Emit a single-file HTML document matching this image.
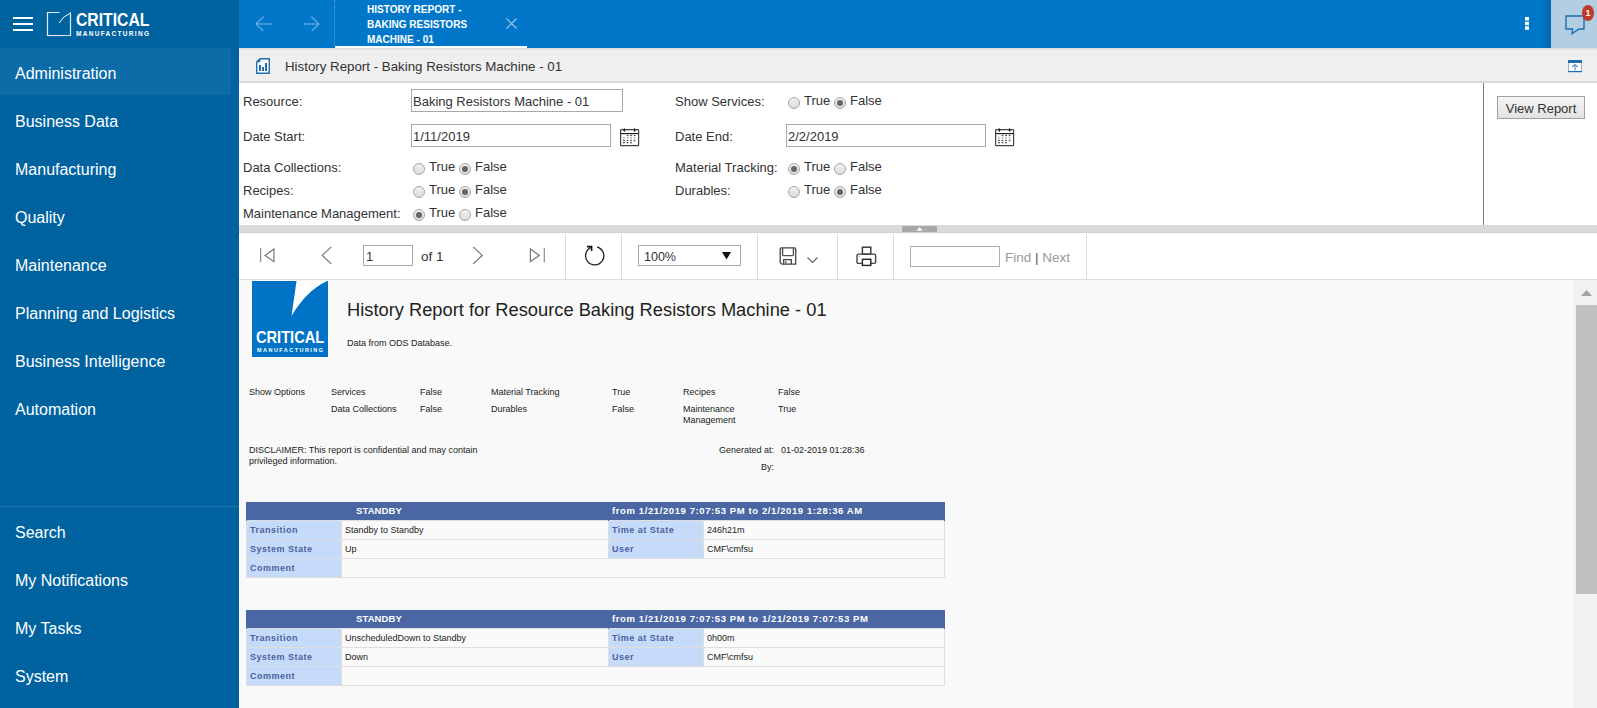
<!DOCTYPE html>
<html><head><meta charset="utf-8">
<style>
*{box-sizing:border-box;margin:0;padding:0}
html,body{width:1597px;height:708px;overflow:hidden;font-family:"Liberation Sans",sans-serif;background:#fff;position:relative}
.a{position:absolute}
svg{position:absolute;overflow:visible}
#side{position:absolute;left:0;top:0;width:239px;height:708px;background:#0063a0}
.nav{position:absolute;left:15px;color:#fff;font-size:16px;line-height:20px;white-space:nowrap;margin-top:0.5px}
#hdr{position:absolute;left:239px;top:0;width:1358px;height:48px;background:#0077c8}
.tab{position:absolute;left:128px;top:2px;color:#fff;font-size:10.5px;font-weight:bold;line-height:15px;white-space:nowrap;transform:scaleX(0.955);transform-origin:0 0}
#tbar{position:absolute;left:239px;top:48px;width:1358px;height:35px;background:#efefef;border-top:2px solid #e2e2e2;border-bottom:2px solid #d9d9d9}
.lbl{position:absolute;font-size:13px;color:#333;white-space:nowrap;line-height:16px}
.inp{position:absolute;border:1px solid #a9a9a9;background:#fff;font-size:13px;color:#333;line-height:20px;padding-left:1px;padding-top:2px;white-space:nowrap}
.rad{position:absolute;width:12px;height:12px;border-radius:50%;border:1px solid #a6a6a6;background:linear-gradient(#f0f0f0,#dcdcdc)}
.rad.on::after{content:"";position:absolute;left:2px;top:2px;width:6px;height:6px;border-radius:50%;background:#666}
#split{position:absolute;left:239px;top:225px;width:1358px;height:8px;background:#dadada}
#tool{position:absolute;left:239px;top:232px;width:1358px;height:48px;background:#fff;border-top:1px solid #d0d0d0;border-bottom:1px solid #dcdcdc}
.sep{position:absolute;top:1px;width:1px;height:46px;background:#dcdcdc}
#rep{position:absolute;left:239px;top:280px;width:1336px;height:428px;background:#f9f9f9}
.r{position:absolute;font-size:9px;color:#222;white-space:nowrap;line-height:11px;margin-top:1px}
#sb{position:absolute;left:1574px;top:280px;width:23px;height:428px;background:#f0f1f1}
table.t{position:absolute;border-collapse:collapse;width:698px;font-size:9px;table-layout:fixed}
table.t th{background:#4a67a3;color:#fff;font-weight:bold;height:18px;line-height:16px;vertical-align:top;text-align:left;padding:0;border:1px solid #4a67a3;border-bottom:none}
table.t td{height:19px;border:1px solid #dedede;padding:0 0 0 3px;line-height:17px;white-space:nowrap;color:#222;background:#fafafa}
table.t td.l{background:#c6dbfa;color:#4a62a0;font-weight:bold;border-color:#dedede;letter-spacing:0.5px}
</style></head><body>
<!-- SIDEBAR -->
<div id="side">
  <svg style="left:13px;top:17px" width="20" height="14"><rect x="0" y="0" width="20" height="2" fill="#fff"/><rect x="0" y="6" width="20" height="2" fill="#fff"/><rect x="0" y="12" width="20" height="2" fill="#fff"/></svg>
  <svg style="left:47px;top:12px" width="25" height="25"><path d="M12.5 0.5 H0.5 V23.5 H23.5 V0.5" fill="none" stroke="#dfe9f2" stroke-width="1.2"/><path d="M12 11 Q16 4 23.5 1" fill="none" stroke="#fff" stroke-width="1"/></svg>
  <div class="a" style="left:76px;top:9.5px;color:#fff;font-weight:bold;font-size:18px;line-height:20px;letter-spacing:0px;transform:scaleX(0.875);transform-origin:0 0">CRITICAL</div>
  <div class="a" style="left:76px;top:30px;color:#fff;font-weight:bold;font-size:6.5px;line-height:8px;letter-spacing:1.3px">MANUFACTURING</div>
  <div class="a" style="left:0;top:48px;width:231px;height:47px;background:#0c6ca8"></div>
  <div class="nav" style="top:63px">Administration</div>
  <div class="nav" style="top:111px">Business Data</div>
  <div class="nav" style="top:159px">Manufacturing</div>
  <div class="nav" style="top:207px">Quality</div>
  <div class="nav" style="top:255px">Maintenance</div>
  <div class="nav" style="top:303px">Planning and Logistics</div>
  <div class="nav" style="top:351px">Business Intelligence</div>
  <div class="nav" style="top:399px">Automation</div>
  <div class="a" style="left:0;top:506px;width:239px;height:0;border-top:1px dotted #3a86b8"></div>
  <div class="nav" style="top:522px">Search</div>
  <div class="nav" style="top:570px">My Notifications</div>
  <div class="nav" style="top:618px">My Tasks</div>
  <div class="nav" style="top:666px">System</div>
</div>
<!-- HEADER -->
<div id="hdr">
  <svg style="left:16px;top:16px" width="18" height="16"><path d="M8.5 0.8 L1 8 L8.5 15.2 M1 8 H17" fill="none" stroke="#72b1e2" stroke-width="1.5" stroke-dasharray="2 0.6"/></svg>
  <svg style="left:63px;top:16px" width="18" height="16"><path d="M9.5 0.8 L17 8 L9.5 15.2 M17 8 H1" fill="none" stroke="#72b1e2" stroke-width="1.5" stroke-dasharray="2 0.6"/></svg>
  <div class="a" style="left:95px;top:0;height:46px;border-left:1px dotted #5aa3d8"></div>
  <div class="tab">HISTORY REPORT -<br>BAKING RESISTORS<br>MACHINE - 01</div>
  <svg style="left:267px;top:18px" width="11" height="11"><path d="M0.5 0.5 L10.5 10.5 M10.5 0.5 L0.5 10.5" stroke="#9cc8ea" stroke-width="1.2"/></svg>
  <div class="a" style="left:96px;top:46px;width:192px;height:2px;background:#fff"></div>
  <svg style="left:1286px;top:17px" width="4" height="13"><rect x="0" y="0" width="4" height="3.5" fill="#fff"/><rect x="0" y="4.7" width="4" height="3.5" fill="#fff"/><rect x="0" y="9.3" width="4" height="3.5" fill="#fff"/></svg>
  <div class="a" style="left:1302px;top:0;width:10px;height:48px;background:linear-gradient(90deg,rgba(0,0,0,0),rgba(0,0,0,0.13))"></div><div class="a" style="left:1312px;top:0;width:46px;height:48px;background:#b3cde3"></div>
  <svg style="left:1326px;top:14.5px" width="22" height="21"><path d="M1 1 H19 V14 H14 L7 18.5 L7.5 14 H1 Z" fill="none" stroke="#1d6eae" stroke-width="1.4" stroke-linejoin="miter"/></svg>
  <div class="a" style="left:1343px;top:5px;width:12px;height:16px;border-radius:50%;background:#c0392b;color:#fff;font-size:9px;font-weight:bold;line-height:16px;text-align:center">1</div>
</div>
<!-- TITLE BAR -->
<div id="tbar">
  <svg style="left:17px;top:8px" width="15" height="17"><path d="M4 0.75 H13.25 V15.25 H0.75 V4 Z" fill="#fff" stroke="#1d6eae" stroke-width="1.4"/><path d="M0.5 4.3 L4.3 0.5 V4.3 Z" fill="#1d6eae"/><rect x="3" y="7" width="2" height="6" fill="#1d6eae"/><rect x="6" y="9" width="2" height="4" fill="#1d6eae"/><rect x="9" y="5" width="2" height="8" fill="#1d6eae"/></svg>
  <div class="a" style="left:46px;top:8px;font-size:13.3px;color:#333;line-height:18px;white-space:nowrap">History Report - Baking Resistors Machine - 01</div>
  <svg style="left:1329px;top:10px" width="14" height="12"><rect x="0.5" y="0.5" width="13" height="11" fill="#fff" stroke="#9bb0d8" stroke-width="1"/><rect x="0" y="0" width="14" height="3" fill="#1d6eae"/><rect x="0" y="11" width="14" height="1.2" fill="#1d6eae"/><path d="M7 10.5 V4.5 M4.2 7 L7 4.5 L9.8 7" fill="none" stroke="#6e8fca" stroke-width="1.2"/></svg>
</div>
<!-- PARAMS -->
<div class="lbl" style="left:243px;top:94px">Resource:</div>
<div class="inp" style="left:411px;top:89px;width:212px;height:23px">Baking Resistors Machine - 01</div>
<div class="lbl" style="left:243px;top:129px">Date Start:</div>
<div class="inp" style="left:411px;top:124px;width:200px;height:23px">1/11/2019</div>
<div class="lbl" style="left:243px;top:160px">Data Collections:</div>
<div class="lbl" style="left:243px;top:183px">Recipes:</div>
<div class="lbl" style="left:243px;top:206px">Maintenance Management:</div>
<div class="rad" style="left:413px;top:163px"></div><div class="lbl" style="left:429px;top:159px">True</div>
<div class="rad on" style="left:459px;top:163px"></div><div class="lbl" style="left:475px;top:159px">False</div>
<div class="rad" style="left:413px;top:186px"></div><div class="lbl" style="left:429px;top:182px">True</div>
<div class="rad on" style="left:459px;top:186px"></div><div class="lbl" style="left:475px;top:182px">False</div>
<div class="rad on" style="left:413px;top:209px"></div><div class="lbl" style="left:429px;top:205px">True</div>
<div class="rad" style="left:459px;top:209px"></div><div class="lbl" style="left:475px;top:205px">False</div>

<div class="lbl" style="left:675px;top:94px">Show Services:</div>
<div class="rad" style="left:788px;top:97px"></div><div class="lbl" style="left:804px;top:93px">True</div>
<div class="rad on" style="left:834px;top:97px"></div><div class="lbl" style="left:850px;top:93px">False</div>
<div class="lbl" style="left:675px;top:129px">Date End:</div>
<div class="inp" style="left:786px;top:124px;width:200px;height:23px">2/2/2019</div>
<div class="lbl" style="left:675px;top:160px">Material Tracking:</div>
<div class="rad on" style="left:788px;top:163px"></div><div class="lbl" style="left:804px;top:159px">True</div>
<div class="rad" style="left:834px;top:163px"></div><div class="lbl" style="left:850px;top:159px">False</div>
<div class="lbl" style="left:675px;top:183px">Durables:</div>
<div class="rad" style="left:788px;top:186px"></div><div class="lbl" style="left:804px;top:182px">True</div>
<div class="rad on" style="left:834px;top:186px"></div><div class="lbl" style="left:850px;top:182px">False</div>

<svg style="left:620px;top:128px" width="19" height="18"><rect x="0.6" y="1.6" width="18" height="16" rx="0.6" fill="#fff" stroke="#444" stroke-width="1.2"/><path d="M0.6 5.6 H18.6" stroke="#111" stroke-width="1.1"/><ellipse cx="4.3" cy="2" rx="1" ry="1.7" fill="#222"/><ellipse cx="14.6" cy="2" rx="1" ry="1.7" fill="#222"/><rect x="6.6" y="6.8" width="1.8" height="1.3" fill="#555"/><rect x="10.1" y="6.8" width="1.8" height="1.3" fill="#555"/><rect x="13.7" y="6.8" width="1.8" height="1.3" fill="#555"/><rect x="3.0" y="9.2" width="1.8" height="1.3" fill="#aaa"/><rect x="6.6" y="9.2" width="1.8" height="1.3" fill="#aaa"/><rect x="10.1" y="9.2" width="1.8" height="1.3" fill="#aaa"/><rect x="13.7" y="9.2" width="1.8" height="1.3" fill="#aaa"/><rect x="3.0" y="11.8" width="1.8" height="1.3" fill="#555"/><rect x="6.6" y="11.8" width="1.8" height="1.3" fill="#555"/><rect x="10.1" y="11.8" width="1.8" height="1.3" fill="#555"/><rect x="13.7" y="11.8" width="1.8" height="1.3" fill="#555"/><rect x="3.0" y="14.0" width="1.8" height="1.3" fill="#555"/><rect x="6.6" y="14.0" width="1.8" height="1.3" fill="#555"/><rect x="10.1" y="14.0" width="1.8" height="1.3" fill="#555"/></svg>
<svg style="left:995px;top:128px" width="19" height="18"><rect x="0.6" y="1.6" width="18" height="16" rx="0.6" fill="#fff" stroke="#444" stroke-width="1.2"/><path d="M0.6 5.6 H18.6" stroke="#111" stroke-width="1.1"/><ellipse cx="4.3" cy="2" rx="1" ry="1.7" fill="#222"/><ellipse cx="14.6" cy="2" rx="1" ry="1.7" fill="#222"/><rect x="6.6" y="6.8" width="1.8" height="1.3" fill="#555"/><rect x="10.1" y="6.8" width="1.8" height="1.3" fill="#555"/><rect x="13.7" y="6.8" width="1.8" height="1.3" fill="#555"/><rect x="3.0" y="9.2" width="1.8" height="1.3" fill="#aaa"/><rect x="6.6" y="9.2" width="1.8" height="1.3" fill="#aaa"/><rect x="10.1" y="9.2" width="1.8" height="1.3" fill="#aaa"/><rect x="13.7" y="9.2" width="1.8" height="1.3" fill="#aaa"/><rect x="3.0" y="11.8" width="1.8" height="1.3" fill="#555"/><rect x="6.6" y="11.8" width="1.8" height="1.3" fill="#555"/><rect x="10.1" y="11.8" width="1.8" height="1.3" fill="#555"/><rect x="13.7" y="11.8" width="1.8" height="1.3" fill="#555"/><rect x="3.0" y="14.0" width="1.8" height="1.3" fill="#555"/><rect x="6.6" y="14.0" width="1.8" height="1.3" fill="#555"/><rect x="10.1" y="14.0" width="1.8" height="1.3" fill="#555"/></svg>

<div class="a" style="left:1483px;top:83px;width:1px;height:142px;background:#7a7a7a"></div>
<div class="a" style="left:1497px;top:96px;width:88px;height:23px;border:1px solid #a0a0a0;background:linear-gradient(#f5f5f5,#e2e2e2);font-size:13px;color:#333;line-height:21px;padding-top:1px;text-align:center;white-space:nowrap">View Report</div>

<!-- SPLITTER -->
<div id="split">
  <div class="a" style="left:663px;top:1px;width:35px;height:6px;background:#a9a9a9"></div>
  <svg style="left:677px;top:2px" width="7" height="5"><path d="M0.3 3.8 L3.5 0.3 L6.7 3.8 Z" fill="#fff"/></svg>
</div>

<!-- TOOLBAR -->
<div id="tool">
  <svg style="left:21px;top:15px" width="16" height="16"><path d="M0.6 0.2 V14.3" stroke="#8a8a8a" stroke-width="1.2"/><path d="M13.9 1 V13.6 L5 7.4 Z" fill="none" stroke="#7a7a7a" stroke-width="1.2" stroke-linejoin="miter"/></svg>
  <svg style="left:82px;top:13px" width="12" height="19"><path d="M10.3 0.9 L1.3 9.4 L10.3 17.9" fill="none" stroke="#7a7a7a" stroke-width="1.3"/></svg>
  <div class="inp" style="left:124px;top:12px;width:50px;height:21px;line-height:19px;padding-left:2px;padding-top:1px;font-size:13px">1</div>
  <div class="a" style="left:182px;top:16px;font-size:13.5px;color:#333;line-height:16px">of 1</div>
  <svg style="left:233px;top:13px" width="12" height="19"><path d="M1.2 0.9 L10.2 9.4 L1.2 17.9" fill="none" stroke="#7a7a7a" stroke-width="1.3"/></svg>
  <svg style="left:290px;top:15px" width="17" height="16"><path d="M15.3 0.2 V14.3" stroke="#8a8a8a" stroke-width="1.2"/><path d="M1.4 1 V13.6 L10.3 7.4 Z" fill="none" stroke="#7a7a7a" stroke-width="1.2" stroke-linejoin="miter"/></svg>
  <div class="sep" style="left:326px"></div>
  <svg style="left:344.5px;top:13px" width="21" height="21"><path d="M13.2 1 A9.1 9.1 0 1 1 7.6 1.2" fill="none" stroke="#222" stroke-width="1.3"/><path d="M3 0.6 H7.6 V4.9" fill="none" stroke="#111" stroke-width="1.6" stroke-linejoin="miter"/></svg>
  <div class="sep" style="left:382px"></div>
  <div class="inp" style="left:399px;top:12px;width:103px;height:21px;line-height:19px;padding-left:5px;font-size:12.5px">100%</div>
  <svg style="left:483px;top:19px" width="9" height="8"><path d="M0 0 H9 L4.5 7.5 Z" fill="#111"/></svg>
  <div class="sep" style="left:518px"></div>
  <svg style="left:540px;top:13.6px" width="18" height="19"><path d="M1.2 2.1 Q1.2 0.9 2.4 0.9 H15.5 Q16.7 0.9 16.7 2.1 V17.2 H3 L1.2 15.4 Z" fill="none" stroke="#444" stroke-width="1.3"/><path d="M3.6 0.9 V7.7 Q3.6 8.6 4.5 8.6 H13.5 Q14.4 8.6 14.4 7.7 V0.9" fill="none" stroke="#555" stroke-width="1.4"/><path d="M4.7 17.2 V12.6 H12.3 V17.2" fill="none" stroke="#444" stroke-width="1.3"/><rect x="6.3" y="14" width="1.3" height="3.2" fill="#666"/></svg>
  <svg style="left:568px;top:24px" width="11" height="7"><path d="M0.5 0.5 L5.5 5.5 L10.5 0.5" fill="none" stroke="#666" stroke-width="1.2"/></svg>
  <div class="sep" style="left:598px"></div>
  <svg style="left:617px;top:12.7px" width="21" height="21"><rect x="6.4" y="1.2" width="8.4" height="7" fill="none" stroke="#333" stroke-width="1.4"/><path d="M6 17.4 H2.5 Q1 17.4 1 16 V9.6 Q1 8.1 2.5 8.1 H18.1 Q19.6 8.1 19.6 9.6 V16 Q19.6 17.4 18.1 17.4 H14.8" fill="none" stroke="#444" stroke-width="1.4"/><rect x="6.4" y="13.3" width="8.4" height="6.1" fill="#fff" stroke="#222" stroke-width="1.4"/><rect x="2.8" y="9.8" width="1" height="1" fill="#999"/></svg>
  <div class="sep" style="left:654px"></div>
  <div class="inp" style="left:671px;top:13px;width:90px;height:21px;border-color:#b0b0b0"></div>
  <div class="a" style="left:766px;top:16.5px;font-size:13.5px;color:#9a9a9a;line-height:16px;white-space:nowrap">Find <span style="color:#555">|</span> Next</div>
  <div class="sep" style="left:847px"></div>
</div>

<!-- REPORT -->
<div id="rep">
  <svg style="left:13px;top:1px" width="76" height="76"><rect x="0" y="0" width="76" height="76" fill="#0073c6"/><path d="M44.5 0 L39.5 35 Q54 10 75 0 Z" fill="#fff"/></svg>
  <div class="a" style="left:17px;top:48.5px;color:#fff;font-weight:bold;font-size:17px;line-height:18px;transform:scaleX(0.86);transform-origin:0 0">CRITICAL</div>
  <div class="a" style="left:18px;top:66.5px;color:#fff;font-weight:bold;font-size:5.5px;line-height:6px;letter-spacing:1.45px">MANUFACTURING</div>
  <div class="a" style="left:108px;top:19px;font-size:18.3px;color:#222;line-height:22px;white-space:nowrap">History Report for Resource Baking Resistors Machine - 01</div>
  <div class="r" style="left:108px;top:57px">Data from ODS Database.</div>

  <div class="r" style="left:10px;top:106px">Show Options</div>
  <div class="r" style="left:92px;top:106px">Services</div>
  <div class="r" style="left:181px;top:106px">False</div>
  <div class="r" style="left:252px;top:106px">Material Tracking</div>
  <div class="r" style="left:373px;top:106px">True</div>
  <div class="r" style="left:444px;top:106px">Recipes</div>
  <div class="r" style="left:539px;top:106px">False</div>
  <div class="r" style="left:92px;top:123px">Data Collections</div>
  <div class="r" style="left:181px;top:123px">False</div>
  <div class="r" style="left:252px;top:123px">Durables</div>
  <div class="r" style="left:373px;top:123px">False</div>
  <div class="r" style="left:444px;top:123px">Maintenance<br>Management</div>
  <div class="r" style="left:539px;top:123px">True</div>

  <div class="r" style="left:10px;top:164px;line-height:11px">DISCLAIMER: This report is confidential and may contain<br>privileged information.</div>
  <div class="r" style="left:435px;top:164px;width:100px;text-align:right">Generated at:</div>
  <div class="r" style="left:542px;top:164px">01-02-2019 01:28:36</div>
  <div class="r" style="left:435px;top:181px;width:100px;text-align:right">By:</div>

  <table class="t" style="left:7px;top:222px">
    <colgroup><col style="width:95px"><col style="width:267px"><col style="width:95px"><col style="width:241px"></colgroup>
    <tr><th colspan="2" style="padding-left:109px;font-size:9.5px;letter-spacing:0.1px">STANDBY</th><th colspan="2" style="padding-left:3px;font-size:9.5px;letter-spacing:0.6px">from 1/21/2019 7:07:53 PM to 2/1/2019 1:28:36 AM</th></tr>
    <tr><td class="l">Transition</td><td>Standby to Standby</td><td class="l">Time at State</td><td>246h21m</td></tr>
    <tr><td class="l">System State</td><td>Up</td><td class="l">User</td><td>CMF\cmfsu</td></tr>
    <tr><td class="l">Comment</td><td colspan="3"></td></tr>
  </table>
  <table class="t" style="left:7px;top:330px">
    <colgroup><col style="width:95px"><col style="width:267px"><col style="width:95px"><col style="width:241px"></colgroup>
    <tr><th colspan="2" style="padding-left:109px;font-size:9.5px;letter-spacing:0.1px">STANDBY</th><th colspan="2" style="padding-left:3px;font-size:9.5px;letter-spacing:0.6px">from 1/21/2019 7:07:53 PM to 1/21/2019 7:07:53 PM</th></tr>
    <tr><td class="l">Transition</td><td>UnscheduledDown to Standby</td><td class="l">Time at State</td><td>0h00m</td></tr>
    <tr><td class="l">System State</td><td>Down</td><td class="l">User</td><td>CMF\cmfsu</td></tr>
    <tr><td class="l">Comment</td><td colspan="3"></td></tr>
  </table>
</div>
<div id="sb">
  <svg style="left:7px;top:10px" width="11" height="6"><path d="M0 6 L5.5 0 L11 6 Z" fill="#a3a3a3"/></svg>
  <div class="a" style="left:2px;top:25px;width:21px;height:289px;background:#c1c1c1"></div>
</div>
</body></html>
